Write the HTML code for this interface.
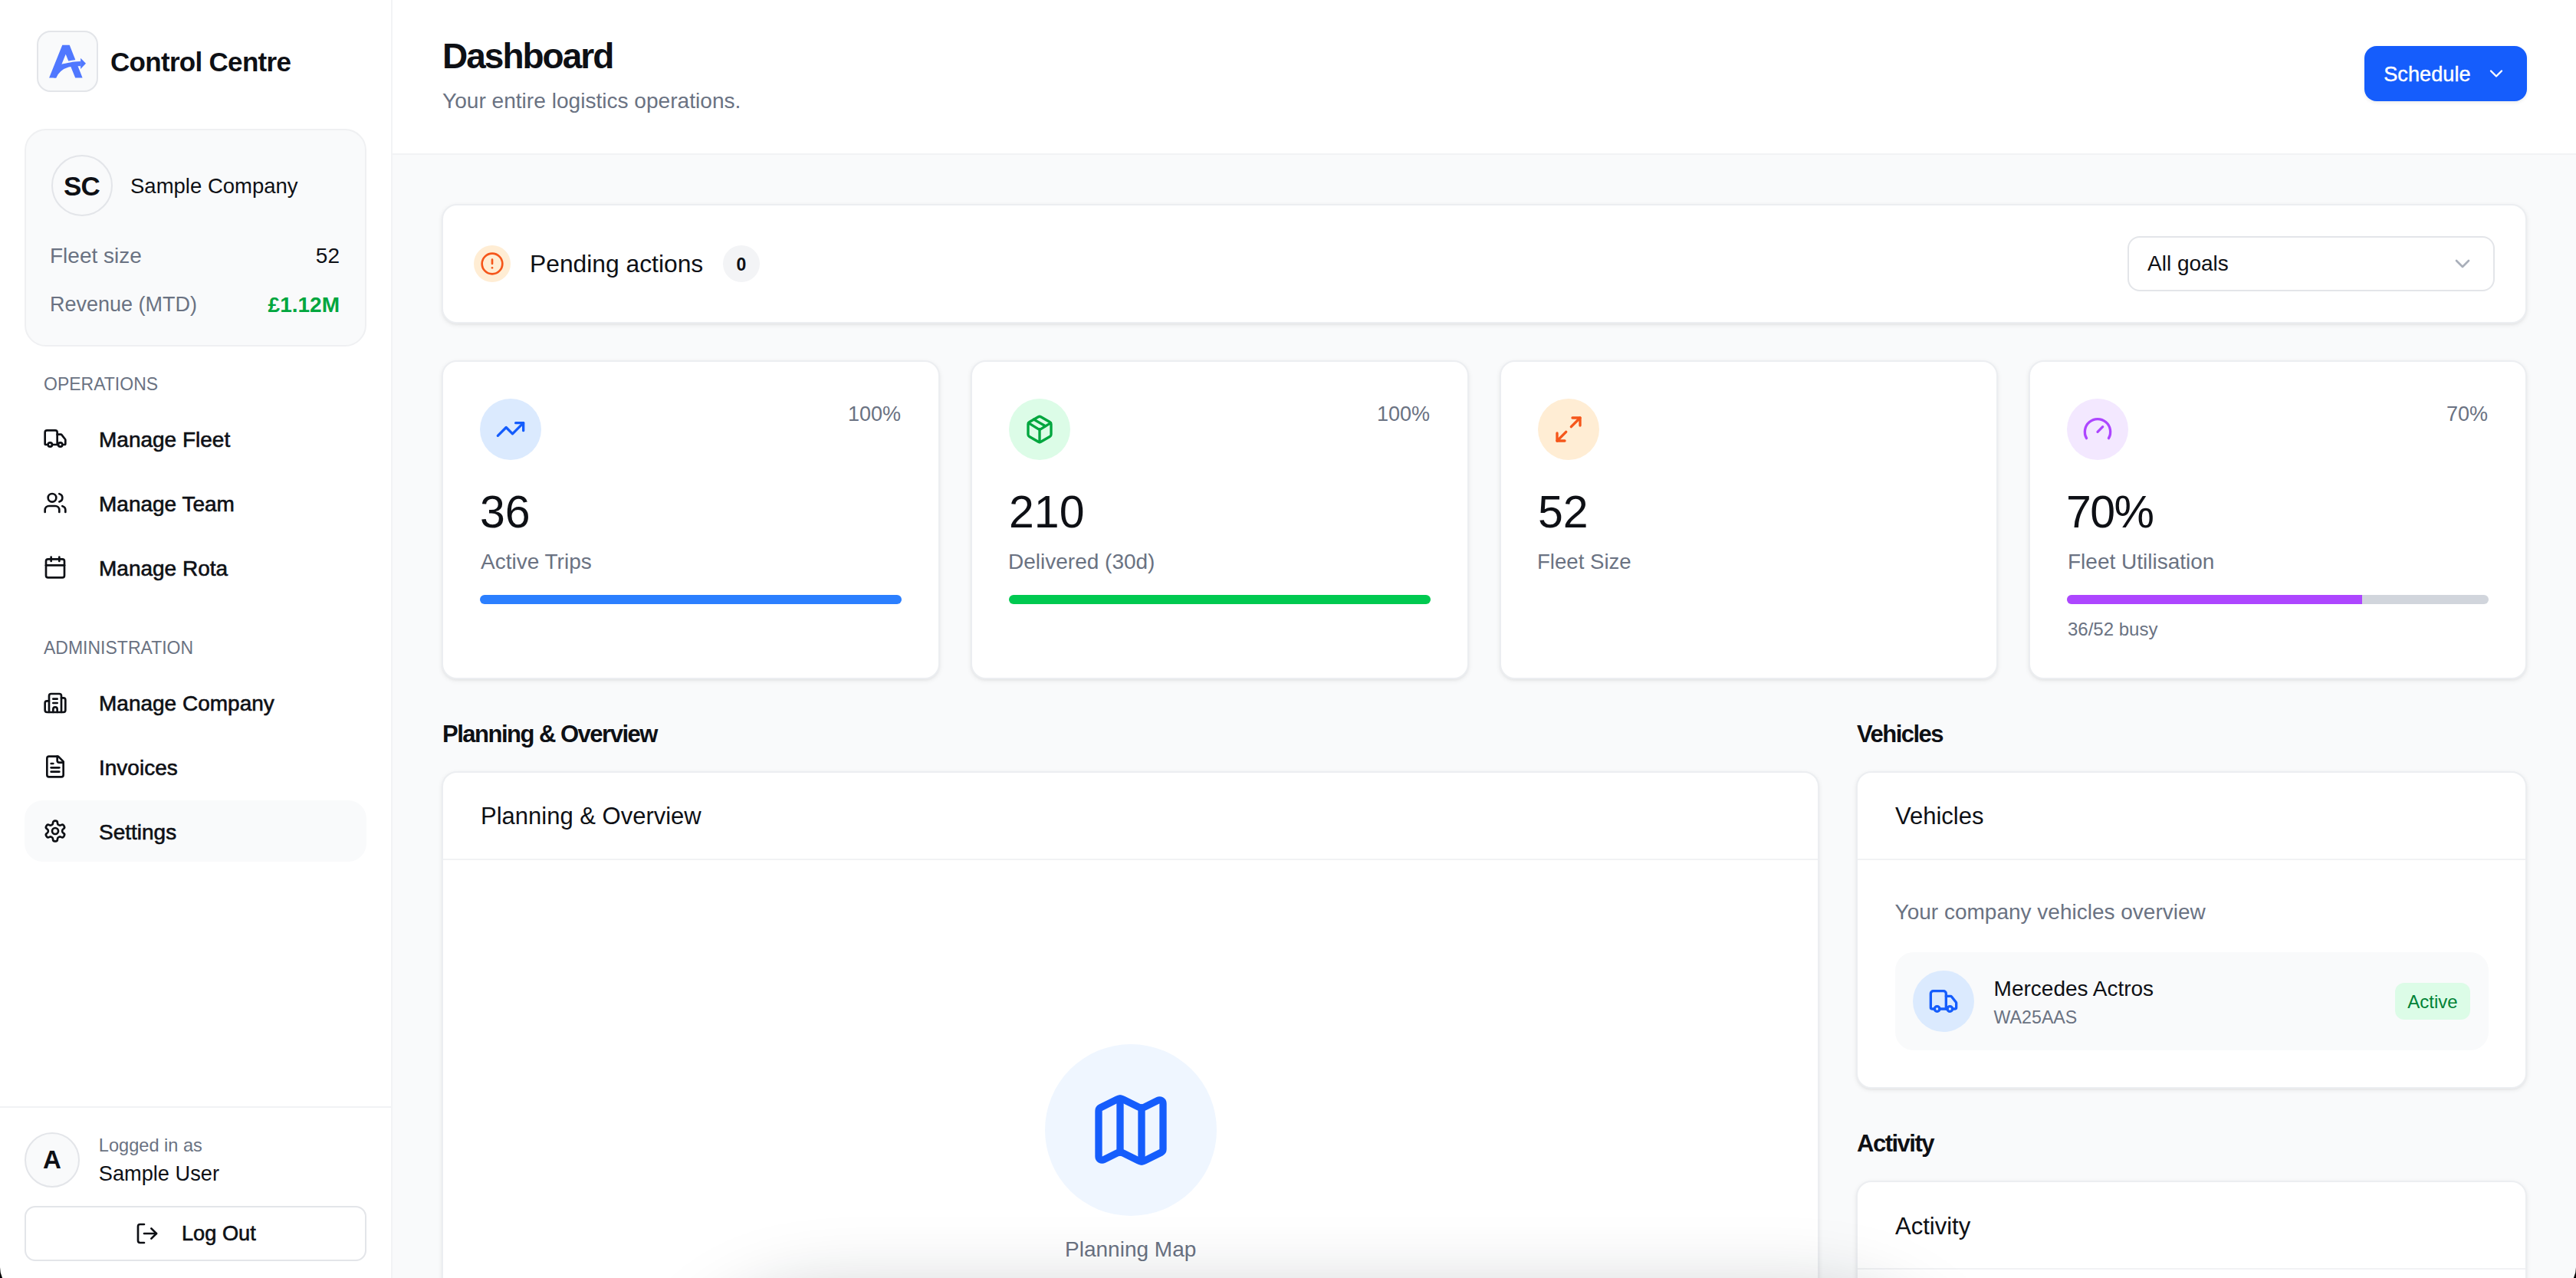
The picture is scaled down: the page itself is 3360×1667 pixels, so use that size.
<!DOCTYPE html>
<html><head><meta charset="utf-8">
<style>
*{box-sizing:border-box;margin:0;padding:0}
html,body{width:3360px;height:1667px;overflow:hidden;background:#fff}
body{font-family:"Liberation Sans",sans-serif;color:#0e1015}
#root{zoom:2;width:1680px;height:833.5px;position:relative;overflow:hidden;background:#f9fafb}
.a{position:absolute}
.t{position:absolute;line-height:1;white-space:nowrap}
svg.i{position:absolute;fill:none;stroke:currentColor;stroke-width:2;stroke-linecap:round;stroke-linejoin:round}
.g{color:#6a7282}
.card{position:absolute;background:#fff;border:1px solid #eceef1;border-radius:10px;box-shadow:0 1px 3px rgba(0,0,0,.07),0 1px 2px -1px rgba(0,0,0,.07)}
.circ{position:absolute;border-radius:50%}
</style></head><body><div id="root">

<!-- SIDEBAR -->
<div class="a" id="sidebar" style="left:0;top:0;width:256px;height:834px;background:#fff;border-right:1px solid #f2f3f5">
  <div class="a" style="left:24px;top:20px;width:40px;height:40px;border:1px solid #e3e5e9;background:#f9fafb;border-radius:9px"></div>
  <svg class="a" style="left:24px;top:20px;width:40px;height:40px" viewBox="48 40 80 80">
    <polygon fill="#5078ff" points="64.1,101.6 81.3,58.8 90.7,58.8 107.6,101.6 98.2,101.6 85.7,70.7 73.2,101.6"/>
    <path d="M85,82.5 Q92,79.6 106,79" stroke="#f9fafb" stroke-width="3" fill="none"/>
    <path fill="#5078ff" d="M73.2,101.6 Q78,91 89.5,87.6 Q96,85.8 105.1,86.3 L105.1,80 Q96,80.3 92.6,81.3 Q84,83 80.1,83.8 L70,101.6 Z"/>
    <polygon fill="#5078ff" points="105.1,75.7 112,82.8 105.1,90"/>
  </svg>
  <div class="t" style="left:72px;top:31.6px;font-size:17.5px;font-weight:700;letter-spacing:-0.35px">Control Centre</div>

  <div class="a" style="left:16px;top:84px;width:223px;height:142px;background:#f9fafb;border:1px solid #eff0f2;border-radius:14px"></div>
  <div class="circ" style="left:33.5px;top:101px;width:40px;height:40px;border:1px solid #e3e5e9;background:#f9fafb"></div>
  <div class="t" style="left:33.5px;width:40px;text-align:center;top:112.6px;font-size:17.5px;font-weight:700;letter-spacing:-0.4px;text-indent:-0.4px">SC</div>
  <div class="t" style="left:85px;top:114.5px;font-size:13.75px">Sample Company</div>
  <div class="t g" style="left:32.5px;top:160px;font-size:14px">Fleet size</div>
  <div class="t" style="right:33.5px;top:160px;font-size:14px">52</div>
  <div class="t g" style="left:32.5px;top:192px;font-size:13.5px">Revenue (MTD)</div>
  <div class="t" style="right:33.5px;top:192px;font-size:14px;font-weight:700;color:#00a63e">£1.12M</div>

  <div class="t g" style="left:28.5px;top:245.2px;font-size:11.5px">OPERATIONS</div>
  <svg class="i" style="left:28px;top:278px;width:16px;height:16px" viewBox="0 0 24 24"><path d="M14 18V6a2 2 0 0 0-2-2H4a2 2 0 0 0-2 2v11a1 1 0 0 0 1 1h2"/><path d="M15 18H9"/><path d="M19 18h2a1 1 0 0 0 1-1v-3.65a1 1 0 0 0-.22-.624l-3.48-4.35A1 1 0 0 0 17.52 8H14"/><circle cx="17" cy="18" r="2"/><circle cx="7" cy="18" r="2"/></svg>
  <div class="t nav" style="left:64.5px;top:280.2px">Manage Fleet</div>
  <svg class="i" style="left:28px;top:320px;width:16px;height:16px" viewBox="0 0 24 24"><path d="M16 21v-2a4 4 0 0 0-4-4H6a4 4 0 0 0-4 4v2"/><circle cx="9" cy="7" r="4"/><path d="M22 21v-2a4 4 0 0 0-3-3.87"/><path d="M16 3.13a4 4 0 0 1 0 7.75"/></svg>
  <div class="t nav" style="left:64.5px;top:322.1px">Manage Team</div>
  <svg class="i" style="left:28px;top:362px;width:16px;height:16px" viewBox="0 0 24 24"><path d="M8 2v4"/><path d="M16 2v4"/><rect width="18" height="18" x="3" y="4" rx="2"/><path d="M3 10h18"/></svg>
  <div class="t nav" style="left:64.5px;top:364px">Manage Rota</div>

  <div class="t g" style="left:28.5px;top:416.8px;font-size:11.5px">ADMINISTRATION</div>
  <svg class="i" style="left:28px;top:450.5px;width:16px;height:16px" viewBox="0 0 24 24"><path d="M10 12h4"/><path d="M10 8h4"/><path d="M14 21v-3a2 2 0 0 0-4 0v3"/><path d="M6 10H4a2 2 0 0 0-2 2v7a2 2 0 0 0 2 2h16a2 2 0 0 0 2-2V9a2 2 0 0 0-2-2h-2"/><path d="M6 21V5a2 2 0 0 1 2-2h8a2 2 0 0 1 2 2v16"/></svg>
  <div class="t nav" style="left:64.5px;top:452.1px">Manage Company</div>
  <svg class="i" style="left:28px;top:492px;width:16px;height:16px" viewBox="0 0 24 24"><path d="M15 2H6a2 2 0 0 0-2 2v16a2 2 0 0 0 2 2h12a2 2 0 0 0 2-2V7Z"/><path d="M14 2v4a2 2 0 0 0 2 2h4"/><path d="M10 9H8"/><path d="M16 13H8"/><path d="M16 17H8"/></svg>
  <div class="t nav" style="left:64.5px;top:494.1px">Invoices</div>
  <div class="a" style="left:16px;top:522px;width:223px;height:40px;background:#f9fafb;border-radius:12px"></div>
  <svg class="i" style="left:28px;top:534px;width:16px;height:16px" viewBox="0 0 24 24"><path d="M12.22 2h-.44a2 2 0 0 0-2 2v.18a2 2 0 0 1-1 1.73l-.43.25a2 2 0 0 1-2 0l-.15-.08a2 2 0 0 0-2.73.73l-.22.38a2 2 0 0 0 .73 2.73l.15.1a2 2 0 0 1 1 1.72v.51a2 2 0 0 1-1 1.74l-.15.09a2 2 0 0 0-.73 2.730l.22.38a2 2 0 0 0 2.73.73l.15-.08a2 2 0 0 1 2 0l.43.25a2 2 0 0 1 1 1.73V20a2 2 0 0 0 2 2h.44a2 2 0 0 0 2-2v-.18a2 2 0 0 1 1-1.73l.43-.25a2 2 0 0 1 2 0l.15.08a2 2 0 0 0 2.73-.73l.22-.39a2 2 0 0 0-.73-2.73l-.15-.08a2 2 0 0 1-1-1.74v-.5a2 2 0 0 1 1-1.74l.15-.09a2 2 0 0 0 .73-2.73l-.22-.38a2 2 0 0 0-2.73-.73l-.15.08a2 2 0 0 1-2 0l-.43-.25a2 2 0 0 1-1-1.73V4a2 2 0 0 0-2-2z"/><circle cx="12" cy="12" r="3"/></svg>
  <div class="t nav" style="left:64.5px;top:535.9px">Settings</div>

  <div class="a" style="left:0;top:721.5px;width:255px;height:1px;background:#f1f2f4"></div>
  <div class="circ" style="left:16px;top:738.5px;width:36px;height:36px;border:1px solid #e3e5e9;background:#f9fafb"></div>
  <div class="t" style="left:16px;width:36px;text-align:center;top:748px;font-size:16.5px;font-weight:700">A</div>
  <div class="t g" style="left:64.4px;top:741.3px;font-size:11.8px">Logged in as</div>
  <div class="t" style="left:64.4px;top:758.3px;font-size:13.6px">Sample User</div>
  <div class="a" style="left:16px;top:786.5px;width:223px;height:36px;border:1px solid #e3e5e9;border-radius:7px;background:#fff"></div>
  <svg class="i" style="left:88px;top:796.5px;width:16px;height:16px" viewBox="0 0 24 24"><path d="M9 21H5a2 2 0 0 1-2-2V5a2 2 0 0 1 2-2h4"/><polyline points="16 17 21 12 16 7"/><line x1="21" x2="9" y1="12" y2="12"/></svg>
  <div class="t nav" style="left:118.5px;top:797.5px;font-size:13.6px">Log Out</div>
</div>

<!-- HEADER -->
<div class="a" style="left:256px;top:0;width:1424px;height:101px;background:#fff;border-bottom:1px solid #f2f3f5"></div>
<div class="t" style="left:288.5px;top:24.8px;font-size:23px;font-weight:700;letter-spacing:-1.0px">Dashboard</div>
<div class="t g" style="left:288.5px;top:58.9px;font-size:14.05px">Your entire logistics operations.</div>
<div class="a" style="left:1542px;top:30px;width:106px;height:36px;background:#155dfc;border-radius:8px;box-shadow:0 1px 2px rgba(0,0,0,.08)"></div>
<div class="t" style="left:1554.6px;top:41.5px;font-size:13.6px;color:#fff;-webkit-text-stroke:0.2px #fff">Schedule</div>
<svg class="i" style="left:1621px;top:41px;width:14px;height:14px;color:#fff" viewBox="0 0 24 24"><path d="m6 9 6 6 6-6"/></svg>

<!-- PENDING -->
<div class="card" style="left:288px;top:133px;width:1360px;height:78px"></div>
<div class="circ" style="left:309px;top:160px;width:24px;height:24px;background:#ffedd4"></div>
<svg class="i" style="left:313px;top:164px;width:16px;height:16px;color:#f5561a" viewBox="0 0 24 24"><circle cx="12" cy="12" r="10"/><line x1="12" x2="12" y1="8" y2="12"/><line x1="12" x2="12.01" y1="16" y2="16"/></svg>
<div class="t" style="left:345.5px;top:164.4px;font-size:15.9px">Pending actions</div>
<div class="circ" style="left:471.5px;top:160px;width:24px;height:24px;background:#f3f4f6"></div>
<div class="t" style="left:471.5px;width:24px;text-align:center;top:167px;font-size:11.5px;font-weight:700">0</div>
<div class="a" style="left:1387.5px;top:154px;width:239.5px;height:36px;border:1px solid #e3e5e9;border-radius:8px;background:#fff"></div>
<div class="t" style="left:1400.5px;top:165.1px;font-size:14px">All goals</div>
<svg class="i" style="left:1598px;top:164px;width:16px;height:16px;color:#a9afba" viewBox="0 0 24 24"><path d="m6 9 6 6 6-6"/></svg>

<!-- STAT CARDS -->
<div class="card" style="left:288px;top:235px;width:325px;height:208px"></div>
<div class="card" style="left:633px;top:235px;width:325px;height:208px"></div>
<div class="card" style="left:978px;top:235px;width:325px;height:208px"></div>
<div class="card" style="left:1323px;top:235px;width:325px;height:208px"></div>

<!-- card1 -->
<div class="circ" style="left:313px;top:260px;width:40px;height:40px;background:#dbeafe"></div>
<svg class="i" style="left:323px;top:270px;width:20px;height:20px;color:#155dfc" viewBox="0 0 24 24"><polyline points="22 7 13.5 15.5 8.5 10.5 2 17"/><polyline points="16 7 22 7 22 13"/></svg>
<div class="t g" style="right:1092.5px;top:263.4px;font-size:13.5px">100%</div>
<div class="t" style="left:313px;top:319.3px;font-size:29.5px">36</div>
<div class="t g" style="left:313.5px;top:359.4px;font-size:14px">Active Trips</div>
<div class="a" style="left:313px;top:388px;width:275px;height:6px;border-radius:3px;background:#2b7fff"></div>

<!-- card2 -->
<div class="circ" style="left:658px;top:260px;width:40px;height:40px;background:#dcfce7"></div>
<svg class="i" style="left:668px;top:270px;width:20px;height:20px;color:#00a63e" viewBox="0 0 24 24"><path d="M11 21.73a2 2 0 0 0 2 0l7-4A2 2 0 0 0 21 16V8a2 2 0 0 0-1-1.73l-7-4a2 2 0 0 0-2 0l-7 4A2 2 0 0 0 3 8v8a2 2 0 0 0 1 1.73z"/><path d="M12 22V12"/><path d="m3.3 7 7.703 4.734a2 2 0 0 0 1.994 0L20.7 7"/><path d="m7.5 4.27 9 5.15"/></svg>
<div class="t g" style="right:747.5px;top:263.4px;font-size:13.5px">100%</div>
<div class="t" style="left:658px;top:319.3px;font-size:29.5px">210</div>
<div class="t g" style="left:657.5px;top:359.4px;font-size:14px">Delivered (30d)</div>
<div class="a" style="left:658px;top:388px;width:275px;height:6px;border-radius:3px;background:#00c950"></div>

<!-- card3 -->
<div class="circ" style="left:1003px;top:260px;width:40px;height:40px;background:#ffedd4"></div>
<svg class="i" style="left:1013px;top:270px;width:20px;height:20px;color:#f5561a" viewBox="0 0 24 24"><polyline points="15 3 21 3 21 9"/><polyline points="9 21 3 21 3 15"/><line x1="21" x2="14" y1="3" y2="10"/><line x1="3" x2="10" y1="21" y2="14"/></svg>
<div class="t" style="left:1003px;top:319.3px;font-size:29.5px">52</div>
<div class="t g" style="left:1002.5px;top:359.4px;font-size:13.8px">Fleet Size</div>

<!-- card4 -->
<div class="circ" style="left:1348px;top:260px;width:40px;height:40px;background:#f3e8ff"></div>
<svg class="i" style="left:1358px;top:270px;width:20px;height:20px;color:#ad46ff" viewBox="0 0 24 24"><path d="m12 14 4-4"/><path d="M3.34 19a10 10 0 1 1 17.32 0"/></svg>
<div class="t g" style="right:57.5px;top:263.4px;font-size:13.5px">70%</div>
<div class="t" style="left:1347.5px;top:319.3px;font-size:29.5px;letter-spacing:-0.8px">70%</div>
<div class="t g" style="left:1348.5px;top:359.4px;font-size:14px">Fleet Utilisation</div>
<div class="a" style="left:1348px;top:388px;width:275px;height:6px;border-radius:3px;background:#d1d5dc;overflow:hidden"><div class="a" style="left:0;top:0;width:192.5px;height:6px;background:#ad46ff"></div></div>
<div class="t g" style="left:1348.5px;top:404.3px;font-size:12px">36/52 busy</div>

<!-- SECTION HEADINGS -->
<div class="t" style="left:288.5px;top:470.9px;font-size:15.5px;font-weight:700;letter-spacing:-0.75px">Planning &amp; Overview</div>
<div class="t" style="left:1211px;top:470.9px;font-size:15.5px;font-weight:700;letter-spacing:-0.75px">Vehicles</div>

<!-- PLANNING CARD -->
<div class="card" style="left:288px;top:503px;width:898.67px;height:400px"></div>
<div class="t" style="left:313.5px;top:524.3px;font-size:15.5px">Planning &amp; Overview</div>
<div class="a" style="left:289px;top:560px;width:896.67px;height:1px;background:#f1f2f4"></div>
<div class="circ" style="left:681.3px;top:681px;width:112px;height:112px;background:#eff6ff"></div>
<svg class="i" style="left:709.3px;top:709px;width:56px;height:56px;color:#155dfc" viewBox="0 0 24 24"><path d="M14.106 5.553a2 2 0 0 0 1.788 0l3.659-1.83A1 1 0 0 1 21 4.619v12.764a1 1 0 0 1-.553.894l-4.553 2.277a2 2 0 0 1-1.788 0l-4.212-2.106a2 2 0 0 0-1.788 0l-3.659 1.83A1 1 0 0 1 3 19.381V6.618a1 1 0 0 1 .553-.894l4.553-2.277a2 2 0 0 1 1.788 0z"/><path d="M15 5.764v15"/><path d="M9 3.236v15"/></svg>
<div class="t g" style="left:288px;width:898.67px;text-align:center;top:808px;font-size:14px">Planning Map</div>

<!-- VEHICLES CARD -->
<div class="card" style="left:1210.67px;top:503px;width:437.33px;height:207px"></div>
<div class="t" style="left:1236px;top:524.3px;font-size:15.5px">Vehicles</div>
<div class="a" style="left:1211.67px;top:560px;width:435.33px;height:1px;background:#f1f2f4"></div>
<div class="t g" style="left:1235.8px;top:588.1px;font-size:14px">Your company vehicles overview</div>
<div class="a" style="left:1236px;top:621px;width:387px;height:64px;background:#f9fafb;border-radius:12px"></div>
<div class="circ" style="left:1247.5px;top:633px;width:40px;height:40px;background:#dbeafe"></div>
<svg class="i" style="left:1257.5px;top:643px;width:20px;height:20px;color:#155dfc" viewBox="0 0 24 24"><path d="M14 18V6a2 2 0 0 0-2-2H4a2 2 0 0 0-2 2v11a1 1 0 0 0 1 1h2"/><path d="M15 18H9"/><path d="M19 18h2a1 1 0 0 0 1-1v-3.65a1 1 0 0 0-.22-.624l-3.48-4.35A1 1 0 0 0 17.52 8H14"/><circle cx="17" cy="18" r="2"/><circle cx="7" cy="18" r="2"/></svg>
<div class="t" style="left:1300.3px;top:637.8px;font-size:14px">Mercedes Actros</div>
<div class="t g" style="left:1300.3px;top:658px;font-size:11.6px">WA25AAS</div>
<div class="a" style="left:1562px;top:641px;width:49px;height:24px;background:#dcfce7;border-radius:6px"></div>
<div class="t" style="left:1562px;width:49px;text-align:center;top:647.3px;font-size:12px;color:#008236">Active</div>

<div class="t" style="left:1211px;top:737.9px;font-size:15.5px;font-weight:700;letter-spacing:-0.75px">Activity</div>
<div class="card" style="left:1210.67px;top:770px;width:437.33px;height:200px"></div>
<div class="t" style="left:1236px;top:791.8px;font-size:15.5px">Activity</div>
<div class="a" style="left:1211.67px;top:827px;width:435.33px;height:1px;background:#f1f2f4"></div>

<!-- bottom shadow from off-screen element -->
<div class="a" style="left:440px;top:846px;width:840px;height:200px;border-radius:110px;box-shadow:0 0 50px 0 rgba(20,30,40,.26)"></div>

</div>
<svg style="position:absolute;left:0;top:0;width:3360px;height:1667px" viewBox="0 0 3360 1667"><path d="M0,1653 A34,34 0 0 0 3.02,1667 L0,1667 Z" fill="#000"/><path d="M3360,1653 A34,34 0 0 1 3356.98,1667 L3360,1667 Z" fill="#000"/></svg>
<style>
.nav{font-size:14px;-webkit-text-stroke:0.3px #0e1015}
</style>
</body></html>
